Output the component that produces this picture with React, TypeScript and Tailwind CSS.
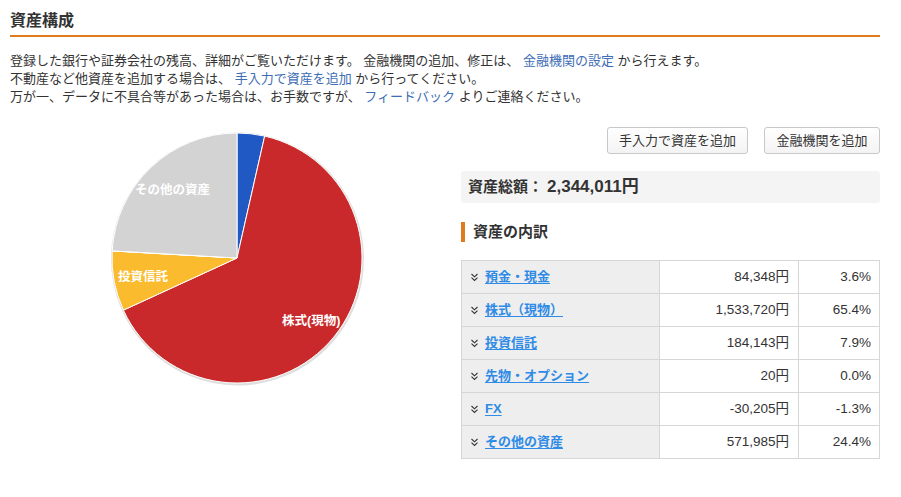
import React from 'react';

const FONT = '"Liberation Sans", "Noto Sans CJK JP", sans-serif';

const rows = [
  { name: '預金・現金', amount: 84348, yen: '84,348円', pct: '3.6%', color: '#2159c4' },
  { name: '株式（現物）', amount: 1533720, yen: '1,533,720円', pct: '65.4%', color: '#c9292a' },
  { name: '投資信託', amount: 184143, yen: '184,143円', pct: '7.9%', color: '#fbbb2e' },
  { name: '先物・オプション', amount: 20, yen: '20円', pct: '0.0%', color: '#1a9a4a' },
  { name: 'FX', amount: -30205, yen: '-30,205円', pct: '-1.3%', color: '#8e44ad' },
  { name: 'その他の資産', amount: 571985, yen: '571,985円', pct: '24.4%', color: '#d3d3d3' },
];

const PieChart: React.FC = () => {
  const cx = 130;
  const cy = 130;
  const r = 125;
  const positive = rows.filter((r) => r.amount > 0);
  const total = positive.reduce((s, x) => s + x.amount, 0);
  let acc = 0;
  const slices = positive.map((row) => {
    const a0 = (acc / total) * Math.PI * 2;
    acc += row.amount;
    const a1 = (acc / total) * Math.PI * 2;
    const x0 = cx + r * Math.sin(a0);
    const y0 = cy - r * Math.cos(a0);
    const x1 = cx + r * Math.sin(a1);
    const y1 = cy - r * Math.cos(a1);
    const large = a1 - a0 > Math.PI ? 1 : 0;
    const d = `M${cx},${cy} L${x0},${y0} A${r},${r} 0 ${large} 1 ${x1},${y1} Z`;
    return { d, color: row.color, key: row.name };
  });

  return (
    <svg width={260} height={260} viewBox="0 0 260 260">
      <circle cx={cx + 0.5} cy={cy + 1} r={r + 1.5} fill="#dedede" />
      {slices.map((s) => (
        <path key={s.key} d={s.d} fill={s.color} stroke="#ffffff" strokeWidth={1} />
      ))}
      <g fill="#ffffff" fontSize={12.5} fontWeight={700} style={{ fontFamily: FONT }}>
        <text x={28} y={66}>その他の資産</text>
        <text x={11} y={153}>投資信託</text>
        <text x={175} y={197}>株式(現物)</text>
      </g>
    </svg>
  );
};

const Chevrons = () => (
  <svg width="9" height="9" viewBox="0 0 9 9" className="shrink-0">
    <polyline points="1.5,1 4.5,3.8 7.5,1" fill="none" stroke="#333" strokeWidth="1.1" />
    <polyline points="1.5,4.6 4.5,7.4 7.5,4.6" fill="none" stroke="#333" strokeWidth="1.1" />
  </svg>
);

export default function App() {
  return (
    <div className="w-[901px] min-h-[497px] bg-white pl-[10px] pr-[21px] text-[#333]" style={{ fontFamily: FONT }}>
      {/* Title */}
      <div className="pt-[11px] pb-[4px] border-b-2 border-[#e07b1b]">
        <h1 className="text-[16px] leading-[20px] font-bold text-[#333]">資産構成</h1>
      </div>

      {/* Intro text */}
      <div className="mt-[15px] text-[13px] leading-[18px]">
        <p>
          登録した銀行や証券会社の残高、詳細がご覧いただけます。 金融機関の追加、修正は、{' '}
          <a className="text-[#3d6db5]">金融機関の設定</a> から行えます。
        </p>
        <p>
          不動産など他資産を追加する場合は、 <a className="text-[#3d6db5]">手入力で資産を追加</a> から行ってください。
        </p>
        <p>
          万が一、データに不具合等があった場合は、お手数ですが、 <a className="text-[#3d6db5]">フィードバック</a> よりご連絡ください。
        </p>
      </div>

      <div className="mt-[21px] flex">
        {/* Pie */}
        <div className="w-[451px] shrink-0">
          <div className="ml-[97px] mt-[1px]">
            <PieChart />
          </div>
        </div>

        {/* Right column */}
        <div className="w-[419px]">
          <div className="flex justify-end gap-[16px]">
            <button className="w-[141px] h-[27px] rounded-[3px] border border-[#c8c8c8] bg-gradient-to-b from-white to-[#f3f3f3] text-[13px] text-[#333]">
              手入力で資産を追加
            </button>
            <button className="w-[116px] h-[27px] rounded-[3px] border border-[#c8c8c8] bg-gradient-to-b from-white to-[#f3f3f3] text-[13px] text-[#333]">
              金融機関を追加
            </button>
          </div>

          <div className="mt-[17px] h-[32px] rounded-[3px] bg-[#f4f4f4] px-[7px] flex items-center text-[15px] font-bold text-[#333]">
            資産総額： <span className="ml-[4px] text-[17px]">2,344,011円</span>
          </div>

          <div className="mt-[19px] flex items-center h-[20px]">
            <div className="w-[4px] h-[20px] bg-[#e07b1b]" />
            <h2 className="ml-[8px] text-[15px] font-bold">資産の内訳</h2>
          </div>

          <table className="mt-[18px] w-[419px] border-collapse text-[13.5px]">
            <tbody>
              {rows.map((row) => (
                <tr key={row.name} className="h-[33px]">
                  <td className="w-[198px] border border-[#d6d6d6] bg-[#eeeeee] pl-[8px]">
                    <div className="flex items-center gap-[6px]">
                      <Chevrons />
                      <a className="font-bold text-[13px] text-[#2e8be6] underline underline-offset-2">{row.name}</a>
                    </div>
                  </td>
                  <td className="w-[139px] border border-[#d6d6d6] text-right pr-[9px]">{row.yen}</td>
                  <td className="border border-[#d6d6d6] text-right pr-[8px]">{row.pct}</td>
                </tr>
              ))}
            </tbody>
          </table>
        </div>
      </div>
    </div>
  );
}
